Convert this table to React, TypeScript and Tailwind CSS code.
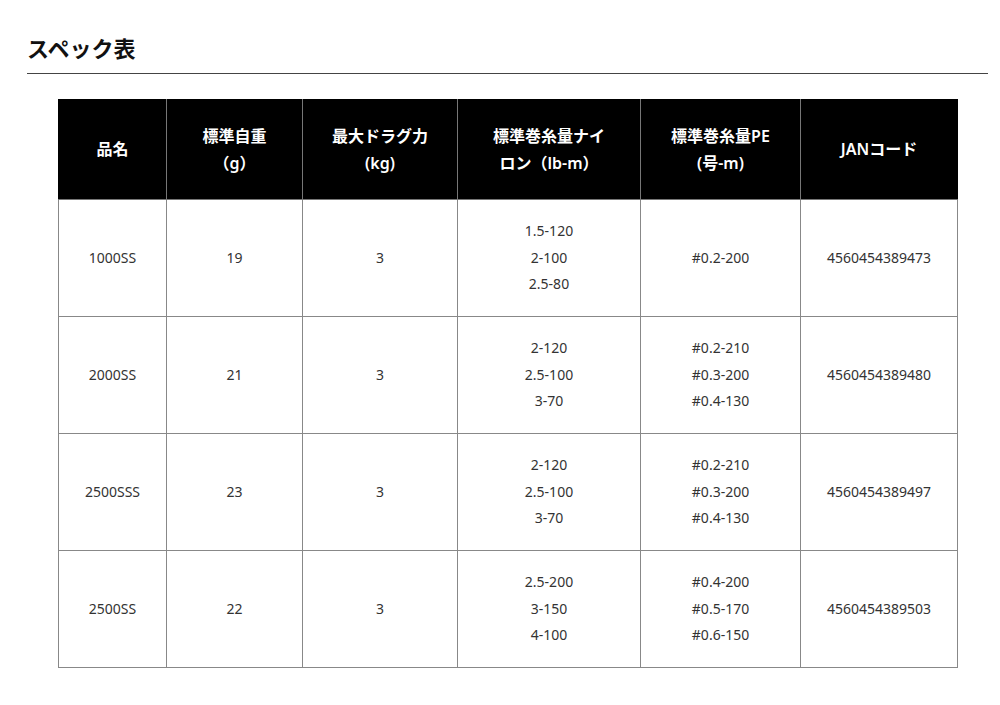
import React from "react";

type Row = {
  name: string;
  weight: string;
  drag: string;
  nylon: string[];
  pe: string[];
  jan: string;
};

const rows: Row[] = [
  { name: "1000SS", weight: "19", drag: "3", nylon: ["1.5-120", "2-100", "2.5-80"], pe: ["#0.2-200"], jan: "4560454389473" },
  { name: "2000SS", weight: "21", drag: "3", nylon: ["2-120", "2.5-100", "3-70"], pe: ["#0.2-210", "#0.3-200", "#0.4-130"], jan: "4560454389480" },
  { name: "2500SSS", weight: "23", drag: "3", nylon: ["2-120", "2.5-100", "3-70"], pe: ["#0.2-210", "#0.3-200", "#0.4-130"], jan: "4560454389497" },
  { name: "2500SS", weight: "22", drag: "3", nylon: ["2.5-200", "3-150", "4-100"], pe: ["#0.4-200", "#0.5-170", "#0.6-150"], jan: "4560454389503" },
];

const headers = [
  ["品名"],
  ["標準自重", "（g）"],
  ["最大ドラグ力", "(kg)"],
  ["標準巻糸量ナイ", "ロン（lb-m）"],
  ["標準巻糸量PE", "(号-m)"],
  ["JANコード"],
];

const widths = ["w-[108px]", "w-[136px]", "w-[155px]", "w-[183px]", "w-[160px]", "w-[157px]"];

const Lines = ({ items }: { items: string[] }) => (
  <>
    {items.map((t) => (
      <div key={t}>{t}</div>
    ))}
  </>
);

export default function App() {
  return (
    <div className="bg-white w-[1000px] h-[705px] font-['Noto_Sans','Noto_Sans_CJK_JP',sans-serif] text-[#333]">
      <div className="pl-[27px] pr-[12px] pt-[33px]">
        <h2 className="text-[22px] font-bold leading-[30px] text-[#111] pb-[10px] border-b border-[#444]">
          スペック表
        </h2>
      </div>
      <div className="pl-[58px] pt-[25px]">
        <table className="border-collapse table-fixed w-[899px]">
          <thead>
            <tr className="h-[100px] bg-black text-white">
              {headers.map((h, i) => (
                <th
                  key={i}
                  className={`${widths[i]} border border-[#777] border-t-black font-semibold text-[16px] leading-[27px] text-center align-middle p-0 ${i === 0 ? "border-l-black" : ""} ${i === 5 ? "border-r-black" : ""}`}
                >
                  <Lines items={h} />
                </th>
              ))}
            </tr>
          </thead>
          <tbody>
            {rows.map((r) => (
              <tr key={r.name} className="h-[117px] text-[14px] leading-[26.5px] text-center">
                <td className="border border-[#888] p-0">{r.name}</td>
                <td className="border border-[#888] p-0">{r.weight}</td>
                <td className="border border-[#888] p-0">{r.drag}</td>
                <td className="border border-[#888] p-0">
                  <Lines items={r.nylon} />
                </td>
                <td className="border border-[#888] p-0">
                  <Lines items={r.pe} />
                </td>
                <td className="border border-[#888] p-0">{r.jan}</td>
              </tr>
            ))}
          </tbody>
        </table>
      </div>
    </div>
  );
}
